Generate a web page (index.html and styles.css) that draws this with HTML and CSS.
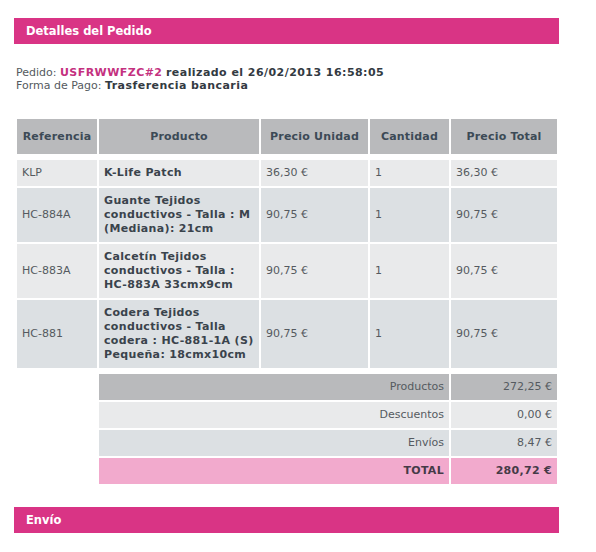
FILE: index.html
```html
<!DOCTYPE html>
<html lang="es">
<head>
<meta charset="utf-8">
<title>Detalles del Pedido</title>
<link rel="stylesheet" href="styles.css">
</head>
<body>
<div class="page">
  <h3 class="bar">Detalles del Pedido</h3>
  <p class="info">
    Pedido: <span class="ref">USFRWWFZC#2</span> <b>realizado el 26/02/2013 16:58:05</b><br>
    Forma de Pago: <b>Trasferencia bancaria</b>
  </p>
  <table class="detail">
    <colgroup>
      <col class="c-ref"><col class="c-prod"><col class="c-unit"><col class="c-qty"><col class="c-total">
    </colgroup>
    <thead>
      <tr class="head">
        <th>Referencia</th><th>Producto</th><th>Precio Unidad</th><th>Cantidad</th><th>Precio Total</th>
      </tr>
    </thead>
    <tbody>
      <tr class="gap"><td colspan="5"></td></tr>
      <tr class="odd">
        <td>KLP</td><td class="prod">K-Life Patch</td><td>36,30 €</td><td>1</td><td>36,30 €</td>
      </tr>
      <tr class="even">
        <td>HC-884A</td><td class="prod">Guante Tejidos conductivos - Talla : M (Mediana): 21cm</td><td>90,75 €</td><td>1</td><td>90,75 €</td>
      </tr>
      <tr class="odd">
        <td>HC-883A</td><td class="prod">Calcetín Tejidos conductivos - Talla : HC-883A 33cmx9cm</td><td>90,75 €</td><td>1</td><td>90,75 €</td>
      </tr>
      <tr class="even">
        <td>HC-881</td><td class="prod">Codera Tejidos conductivos - Talla codera : HC-881-1A (S) Pequeña: 18cmx10cm</td><td>90,75 €</td><td>1</td><td>90,75 €</td>
      </tr>
      <tr class="gap"><td colspan="5"></td></tr>
    </tbody>
    <tfoot>
      <tr class="sum s-gray">
        <td class="blank"></td><td colspan="3">Productos</td><td>272,25 €</td>
      </tr>
      <tr class="sum s-light">
        <td class="blank"></td><td colspan="3">Descuentos</td><td>0,00 €</td>
      </tr>
      <tr class="sum s-blue">
        <td class="blank"></td><td colspan="3">Envíos</td><td>8,47 €</td>
      </tr>
      <tr class="sum s-total">
        <td class="blank"></td><td colspan="3">TOTAL</td><td>280,72 €</td>
      </tr>
    </tfoot>
  </table>
  <h3 class="bar bar-ship">Envío</h3>
</div>
</body>
</html>
```
FILE: styles.css
```css
html, body {
  margin: 0;
  padding: 0;
  background: #ffffff;
}

body {
  font-family: "DejaVu Sans", Verdana, sans-serif;
  font-size: 11px;
  color: #555a60;
}

.page {
  width: 545px;
  padding: 18px 0 0 14px;
}

.bar {
  margin: 0;
  height: 26px;
  line-height: 26px;
  padding: 0 12px;
  background: #d93485;
  color: #ffffff;
  font-size: 11.5px;
  font-weight: bold;
}

.bar-ship {
  margin-top: 21px;
}

.info {
  margin: 22px 0 0 2px;
  line-height: 13px;
}

.info b,
.info .ref {
  letter-spacing: 0.45px;
}

.info b {
  color: #333a42;
}

.ref {
  color: #c4317f;
  font-weight: bold;
}

.detail {
  margin: 25px 0 0 1px;
  width: 544px;
  table-layout: fixed;
  border-collapse: separate;
  border-spacing: 2px;
}

.c-ref { width: 80px; }
.c-prod { width: 160px; }
.c-unit { width: 107px; }
.c-qty { width: 79px; }
.c-total { width: 106px; }

.detail th {
  background: #b9babc;
  color: #3c4a56;
  font-weight: bold;
  text-align: center;
  padding: 10px 2px;
  line-height: 15px;
  letter-spacing: 0.2px;
}

.detail td {
  padding: 6px 4px 6px 5px;
  line-height: 14px;
  vertical-align: middle;
  text-align: left;
}

.detail .gap td {
  padding: 0;
  height: 2px;
  line-height: 0;
}

.odd td { background: #e9eaeb; }
.even td { background: #dce0e3; }

.detail td.prod {
  font-weight: bold;
  color: #3a434c;
  letter-spacing: 0.35px;
}

.detail .sum td {
  text-align: right;
  padding-right: 5px;
}

.detail .sum td.blank {
  background: transparent;
}

.s-gray td { background: #b9babc; }
.s-light td { background: #e9eaeb; }
.s-blue td { background: #dce0e3; }
.s-total td {
  background: #f2aacd;
  font-weight: bold;
  color: #453a47;
  letter-spacing: 0.3px;
}
```
